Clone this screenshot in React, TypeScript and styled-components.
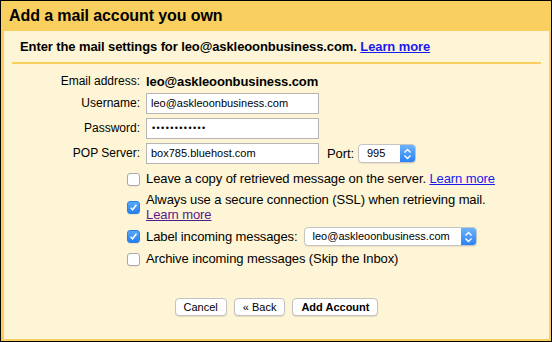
import React from "react";
import styled, { createGlobalStyle } from "styled-components";

const GlobalStyle = createGlobalStyle`
  html, body {
    margin: 0;
    padding: 0;
    background: #fff;
  }
  body {
    font-family: "Liberation Sans", Arial, sans-serif;
    font-size: 13px;
    letter-spacing: -0.1px;
    color: #000;
  }
`;

export default function App() {
    return (
        <>
            <GlobalStyle />
            <Frame>
                <Header>Add a mail account you own</Header>
                <Panel>
                    <Intro>
                        Enter the mail settings for leo@askleoonbusiness.com.{" "}
                        <Link>Learn more</Link>
                    </Intro>
                    <Rule />
                    <Form>
                        <Label>Email address:</Label>
                        <Value $bold>leo@askleoonbusiness.com</Value>

                        <Label>Username:</Label>
                        <Value>
                            <TextInput>leo@askleoonbusiness.com</TextInput>
                        </Value>

                        <Label>Password:</Label>
                        <Value>
                            <TextInput $dots>••••••••••••</TextInput>
                        </Value>

                        <Label>POP Server:</Label>
                        <Value>
                            <TextInput>box785.bluehost.com</TextInput>
                            <PortLabel>Port:</PortLabel>
                            <Select $width={58}>
                                <SelectText>995</SelectText>
                                <Stepper />
                            </Select>
                        </Value>
                    </Form>
                    <Options>
                        <Option>
                            <Check />
                            <span>
                                Leave a copy of retrieved message on the server.{" "}
                                <Link $plain>Learn more</Link>
                            </span>
                        </Option>
                        <Option>
                            <Check $on />
                            <TwoLine>
                                Always use a secure connection (SSL) when retrieving mail.
                                <br />
                                <Link $plain $visited>Learn more</Link>
                            </TwoLine>
                        </Option>
                        <Option>
                            <Check $on />
                            <span>Label incoming messages:</span>
                            <Select $width={173}>
                                <SelectText>leo@askleoonbusiness.com</SelectText>
                                <Stepper />
                            </Select>
                        </Option>
                        <Option>
                            <Check />
                            <span>Archive incoming messages (Skip the Inbox)</span>
                        </Option>
                    </Options>
                    <Buttons>
                        <Button>Cancel</Button>
                        <Button>« Back</Button>
                        <Button $primary>Add Account</Button>
                    </Buttons>
                </Panel>
            </Frame>
        </>
    );
}

function Stepper() {
    return (
        <Arrow>
            <svg width="9" height="12" viewBox="0 0 9 12">
                <path d="M1.5 4.5 L4.5 1.5 L7.5 4.5" fill="none" stroke="#fff" strokeWidth="1.4" />
                <path d="M1.5 7.5 L4.5 10.5 L7.5 7.5" fill="none" stroke="#fff" strokeWidth="1.4" />
            </svg>
        </Arrow>
    );
}

function Check({ $on }: { $on?: boolean }) {
    return (
        <Box $on={$on}>
            {$on && (
                <svg width="9" height="9" viewBox="0 0 9 9">
                    <path d="M1.6 4.8 L3.6 6.8 L7.4 1.8" fill="none" stroke="#fff" strokeWidth="1.6" />
                </svg>
            )}
        </Box>
    );
}

const Frame = styled.div`
    box-sizing: border-box;
    width: 552px;
    height: 342px;
    border: 1px solid #000;
    background: #f9d060;
    display: flex;
    flex-direction: column;
    padding: 0 2px 2px 3px;
`;

const Header = styled.div`
    height: 30px;
    line-height: 30px;
    padding-left: 5px;
    font-size: 16px;
    font-weight: bold;
`;

const Panel = styled.div`
    flex: 1;
    background: #fef5d6;
    display: flex;
    flex-direction: column;
    padding-top: 8px;
`;

const Intro = styled.div`
    padding-left: 16px;
    font-weight: bold;
    line-height: 16px;
`;

const Link = styled.a<{ $plain?: boolean; $visited?: boolean }>`
    color: ${(p) => (p.$visited ? "#551a8b" : "#1a1aee")};
    text-decoration: underline;
    font-weight: ${(p) => (p.$plain ? "normal" : "bold")};
    cursor: pointer;
`;

const Rule = styled.div`
    height: 2px;
    background: #f9d060;
    margin: 7px 8px 0 8px;
`;

const Form = styled.div`
    display: grid;
    grid-template-columns: 136px 1fr;
    column-gap: 6px;
    row-gap: 4px;
    grid-template-rows: 15px 21px 21px 21px;
    margin-top: 10px;
    align-items: center;
`;

const Label = styled.div`
    text-align: right;
    font-size: 12px;
    letter-spacing: 0;
    line-height: 15px;
`;

const Value = styled.div<{ $bold?: boolean }>`
    display: flex;
    align-items: center;
    font-weight: ${(p) => (p.$bold ? "bold" : "normal")};
    line-height: 15px;
`;

const TextInput = styled.div<{ $dots?: boolean }>`
    box-sizing: border-box;
    width: 173px;
    height: 21px;
    border: 1px solid #b5b5b5;
    background: #fff;
    padding-left: ${(p) => (p.$dots ? "5px" : "4px")};
    font-size: ${(p) => (p.$dots ? "9px" : "11px")};
    letter-spacing: ${(p) => (p.$dots ? "1.4px" : "0")};
    line-height: 19px;
    white-space: nowrap;
    overflow: hidden;
`;

const PortLabel = styled.span`
    margin: 0 4px 0 8px;
`;

const Select = styled.div<{ $width: number }>`
    box-sizing: border-box;
    width: ${(p) => p.$width}px;
    height: 19px;
    display: flex;
    align-items: stretch;
    background: #fff;
    border: 1px solid #c4c4c4;
    border-radius: 4px;
    box-shadow: 0 1px 1px rgba(0, 0, 0, 0.08);
    overflow: hidden;
    font-size: 11px;
    font-weight: normal;
    letter-spacing: 0;
`;

const SelectText = styled.span`
    flex: 1;
    padding-left: 8px;
    line-height: 17px;
    white-space: nowrap;
`;

const Arrow = styled.span`
    width: 15px;
    display: flex;
    align-items: center;
    justify-content: center;
    background: linear-gradient(#6cb3fb, #2b82f3);
`;

const Options = styled.div`
    display: flex;
    flex-direction: column;
    gap: 5px;
    margin-top: 7px;
    padding-left: 123px;
`;

const Option = styled.div`
    display: flex;
    align-items: center;
    gap: 6px;
    line-height: 16px;
    min-height: 16px;
`;

const TwoLine = styled.span`
    line-height: 15px;
`;

const Box = styled.span<{ $on?: boolean }>`
    box-sizing: border-box;
    flex: none;
    width: 13px;
    height: 13px;
    border-radius: 3px;
    display: flex;
    align-items: center;
    justify-content: center;
    border: 1px solid ${(p) => (p.$on ? "#2a7fe8" : "#a9a9a9")};
    background: ${(p) => (p.$on ? "linear-gradient(#5aa8fa, #2180f0)" : "#fff")};
    box-shadow: 0 1px 1px rgba(0, 0, 0, 0.06);
`;

const Buttons = styled.div`
    display: flex;
    justify-content: center;
    gap: 7px;
    margin-top: 31px;
`;

const Button = styled.button<{ $primary?: boolean }>`
    box-sizing: border-box;
    height: 18px;
    padding: 0 8px;
    border: 1px solid #c2c2c2;
    border-radius: 4px;
    background: #fff;
    box-shadow: 0 1px 1px rgba(0, 0, 0, 0.1);
    font-family: "Liberation Sans", Arial, sans-serif;
    font-size: 11px;
    font-weight: ${(p) => (p.$primary ? "bold" : "normal")};
    letter-spacing: 0;
    line-height: 16px;
    color: #000;
`;
